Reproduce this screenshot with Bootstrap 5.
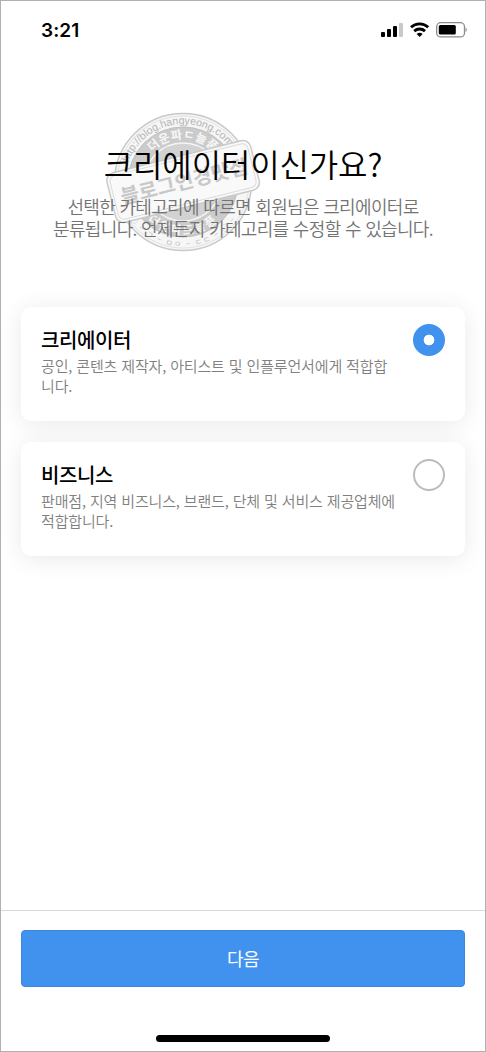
<!DOCTYPE html>
<html lang="ko">
<head>
<meta charset="utf-8">
<meta name="viewport" content="width=device-width, initial-scale=1">
<title>계정 유형 선택</title>
<link href="https://cdn.jsdelivr.net/npm/bootstrap@5.3.0/dist/css/bootstrap.min.css" rel="stylesheet">
<style>
body{font-family:"Noto Sans CJK KR",sans-serif;background:#fff;color:#000}
.phone{height:1052px;width:486px;border:1px solid #b0b0b0;overflow:hidden}
.status{height:58px;padding:0 17px 0 40px}
.clock{font:600 19px/1 Inter,sans-serif;letter-spacing:.1px}
.hero{padding-top:82px;height:248px}
.hero h1{font-size:32px;font-weight:350;line-height:44px;letter-spacing:-.15px;margin:0}
.hero p{font-size:18px;font-weight:350;line-height:22px;letter-spacing:-.67px;color:#737373;margin:10px 0 0}
.stamp{left:102px;top:108px;z-index:0}
.options{padding:0 20px;gap:21px}
.option{height:114px;border-radius:10px;border:0;padding:19px 20px;box-shadow:0 3px 24px rgba(0,0,0,.09)}
.option h2{font-size:20px;font-weight:500;line-height:28px;letter-spacing:-.4px;margin:0}
.option p{font-size:15px;font-weight:350;line-height:20px;letter-spacing:-.15px;color:#808080;margin:2px 0 0;white-space:nowrap}
.option .form-check-input{width:32px;height:32px;margin:-2px 0 0;border:2px solid #bbb;box-shadow:none;flex:none}
.option .form-check-input:checked{background-color:#4192ef;border-color:#4192ef;background-image:radial-gradient(circle,#fff 5px,transparent 5.7px)}
.bottom{border-top:1px solid #d8d8d8;height:141px;padding:19px 20px 0}
.btn-next{height:57px;border-radius:4px;background:#4192ef;border:1px solid #3b87de;color:#fff;font-size:18px;font-weight:400;letter-spacing:-.6px;padding:0}
.home{width:174px;height:7px;border-radius:4px;background:#000;margin-top:48px}
</style>
</head>
<body>
<main class="phone position-relative d-flex flex-column">
  <header class="status d-flex align-items-center justify-content-between">
    <span class="clock">3:21</span>
    <svg width="88" height="18" viewBox="380 21 88 18">
      <rect x="381" y="32" width="4" height="5" rx="1"/><rect x="387" y="29" width="4" height="8" rx="1"/><rect x="393" y="26" width="4" height="11" rx="1"/><rect x="399" y="23" width="4" height="14" rx="1" fill="#c9c9c9"/>
      <g fill="none" stroke="#000" stroke-width="2.8"><path d="M411 27.3a12.5 12.5 0 0 1 17.2 0"/><path d="M414.2 31.1a8 8 0 0 1 10.8 0"/></g><path d="M416.600 34a4.800 4.800 0 0 1 6 0L419.600 37z"/>
      <rect x="436.700" y="22.700" width="27.800" height="14.200" rx="4" fill="none" stroke="#8b8b8b" stroke-width="1.300"/><rect x="438.800" y="25" width="17" height="9.600" rx="1.500"/><path d="M465.600 27.300q2.400 2.500 0 5z" fill="#888"/>
    </svg>
  </header>

  <svg class="stamp position-absolute" width="160" height="148" viewBox="103 109 160 148" aria-hidden="true">
    <defs>
      <path id="arcUrl" d="M125 182a58 58 0 0 1 116 0"/>
      <path id="arcTop" d="M140 182a43 43 0 0 1 86 0"/>
      <path id="arcLow" d="M130.500 182a52.500 52.500 0 0 0 105 0"/>
      <path id="arcEdge" d="M118 182a65 65 0 0 0 130 0"/>
    </defs>
    <circle cx="183" cy="182" r="68.500" fill="#f6f6f6" stroke="#c9c9c9" stroke-width="1.500"/>
    <circle cx="183" cy="182" r="66" fill="none" stroke="#e2e2e2"/>
    <circle cx="183" cy="182" r="55" fill="#cbcbcb" stroke="#c0c0c0"/>
    <circle cx="183" cy="182" r="39" fill="#d2d2d2" stroke="#f5f5f5" stroke-width="1.500"/>
    <g text-anchor="middle">
      <text font-family="Liberation Sans" font-size="10.500" fill="#b4b4b4"><textPath href="#arcUrl" startOffset="45%">http://blog.hangyeong.com</textPath></text>
      <text font-size="12" font-weight="700" letter-spacing=".5" fill="#f7f7f7"><textPath href="#arcTop" startOffset="50%">더운파ㄷ늘품</textPath></text>
      <text font-size="12" font-weight="700" letter-spacing="2" fill="#f7f7f7"><textPath href="#arcLow" startOffset="50%">더운파드늘품</textPath></text>
      <text font-size="8" letter-spacing="1.500" fill="#bcbcbc"><textPath href="#arcEdge" startOffset="50%">○ – ㄱ – ㅁㅇ – ㄷㄷ – ○ –</textPath></text>
    </g>
    <g transform="rotate(-14 183 181)">
      <rect x="109" y="156" width="148" height="51" rx="8" fill="#f9f9f9" stroke="#cacaca" stroke-width="1.500"/>
      <rect x="112" y="159" width="142" height="45" rx="6" fill="none" stroke="#dcdcdc"/>
      <text x="184" y="189" text-anchor="middle" font-size="20" font-weight="700" textLength="130" lengthAdjust="spacingAndGlyphs" fill="#c8c8c8">블로그인경맛집</text>
    </g>
  </svg>

  <section class="hero text-center position-relative">
    <h1>크리에이터이신가요?</h1>
    <p>선택한 카테고리에 따르면 회원님은 크리에이터로<br>분류됩니다. 언제든지 카테고리를 수정할 수 있습니다.</p>
  </section>

  <section class="options d-flex flex-column">
    <label class="option card flex-row justify-content-between align-items-start">
      <div><h2>크리에이터</h2><p>공인, 콘텐츠 제작자, 아티스트 및 인플루언서에게 적합합<br>니다.</p></div>
      <input class="form-check-input" type="radio" name="kind" checked>
    </label>
    <label class="option card flex-row justify-content-between align-items-start">
      <div><h2>비즈니스</h2><p>판매점, 지역 비즈니스, 브랜드, 단체 및 서비스 제공업체에<br>적합합니다.</p></div>
      <input class="form-check-input" type="radio" name="kind">
    </label>
  </section>

  <footer class="bottom mt-auto d-flex flex-column align-items-center">
    <button class="btn btn-next w-100" type="button">다음</button>
    <div class="home"></div>
  </footer>
</main>
<script src="https://cdn.jsdelivr.net/npm/bootstrap@5.3.0/dist/js/bootstrap.bundle.min.js"></script>
</body>
</html>
